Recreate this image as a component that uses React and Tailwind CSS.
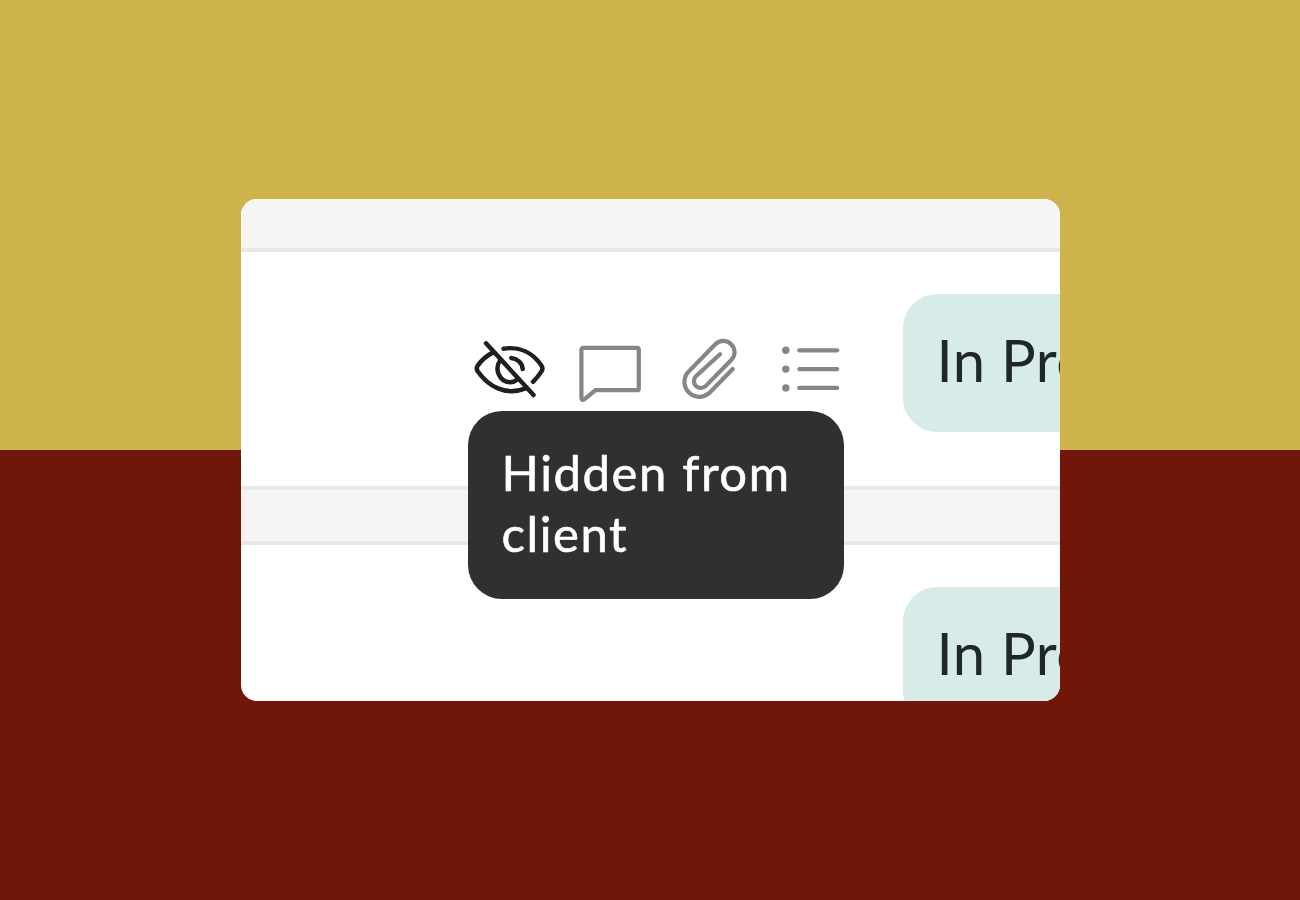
import React from 'react';

const EyeOffIcon = () => (
  <svg width="72" height="68" viewBox="0 -3 72 68" fill="none" stroke="#1f1f20" strokeWidth="4.5" strokeLinecap="round">
    <path d="M12 4.3 59.5 56" />
    <path d="M29.5 9.7C45 7.2 58.5 13.5 67.3 26.3Q69.6 29.4 67.3 32.6 63.5 38.5 59 42.8" />
    <path d="M19.3 13.4C13 16.4 8 20.7 3.7 26.6Q1.9 29.4 3.7 32.2C14 47 31 57.5 52.7 49.2" />
    <path d="M26.4 21C20 29.5 25 42.8 36 43.2Q40 43.2 43 40.7" />
    <path d="M37.3 18.9C43.8 19.8 48.2 24 48.7 30" />
  </svg>
);

const CommentIcon = () => (
  <svg width="64" height="68" viewBox="0 -8 64 68" fill="none" stroke="#868686" strokeWidth="4.2" strokeLinejoin="round">
    <path d="M5.3 3.9H59Q60.8 3.9 60.8 5.7V44.4Q60.8 46.2 59 46.2H17.5L7 54.8Q3.4 57.6 3.4 53.6V5.8Q3.4 3.9 5.3 3.9Z" />
  </svg>
);

const PaperclipIcon = () => (
  <svg width="74" height="68" viewBox="-6 0 74 68" fill="none" stroke="#868686" strokeWidth="4.2" strokeLinecap="round">
    <path d="M52.7 33 29.1 57.2A14.9 14.9 0 0 1 7.9 36.4L35.3 8.3A11.2 11.2 0 0 1 51.3 24L25.6 50.1A6.9 6.9 0 0 1 15.7 40.5L40 18.2" />
  </svg>
);

const ListIcon = () => (
  <svg width="64" height="68" viewBox="0 -4 64 68" fill="none" stroke="#868686" strokeWidth="4.2" strokeLinecap="round">
    {[10.3, 29.1, 47.9].map(y => (
      <g key={y}>
        <circle cx="5.8" cy={y} r="3.7" fill="#868686" stroke="none" />
        <path d={`M19.3 ${y}H57.2`} />
      </g>
    ))}
  </svg>
);

const StatusPill = () => (
  <div className="mt-[42px] h-[138px] w-[400px] flex-shrink-0 rounded-[34px] bg-[#d7ebe8] pl-[34px] pt-[31px] text-[58px] leading-[70px] tracking-[0.5px] text-[#1f2827]">
    In Progress
  </div>
);

const Tooltip = ({ children }) => (
  <div className="absolute -left-1.5 top-[75px] z-10 h-[188px] w-[376px] rounded-[34px] bg-[#303032] pl-[34px] pr-5 pt-[31px] text-[49px] leading-[61px] tracking-[1.6px] text-white [-webkit-text-stroke:0.6px_white]">
    {children}
  </div>
);

export default function App() {
  return (
    <div className="flex h-[900px] w-[1300px] items-center justify-center bg-linear-to-b from-[#ceb24c] from-50% to-[#70170a] to-50% font-['Lato',sans-serif]">
      <div className="h-[502px] w-[819px] overflow-hidden rounded-2xl bg-white">
        <div className="h-[53px] border-b-4 border-[#e8e8e8] bg-[#f6f5f4]" />

        {/* Task row with its tooltip open */}
        <div className="flex h-[234px] items-start pl-[233px]">
          <div className="relative mt-[84px] flex flex-shrink-0 gap-8 pr-[59px]">
            <EyeOffIcon />
            <CommentIcon />
            <PaperclipIcon />
            <ListIcon />
            <Tooltip>Hidden from client</Tooltip>
          </div>
          <StatusPill />
        </div>

        <div className="h-[59px] border-y-4 border-[#e8e8e8] bg-[#f6f5f4]" />

        <div className="flex h-[234px] items-start pl-[662px]">
          <StatusPill />
        </div>
      </div>
    </div>
  );
}
